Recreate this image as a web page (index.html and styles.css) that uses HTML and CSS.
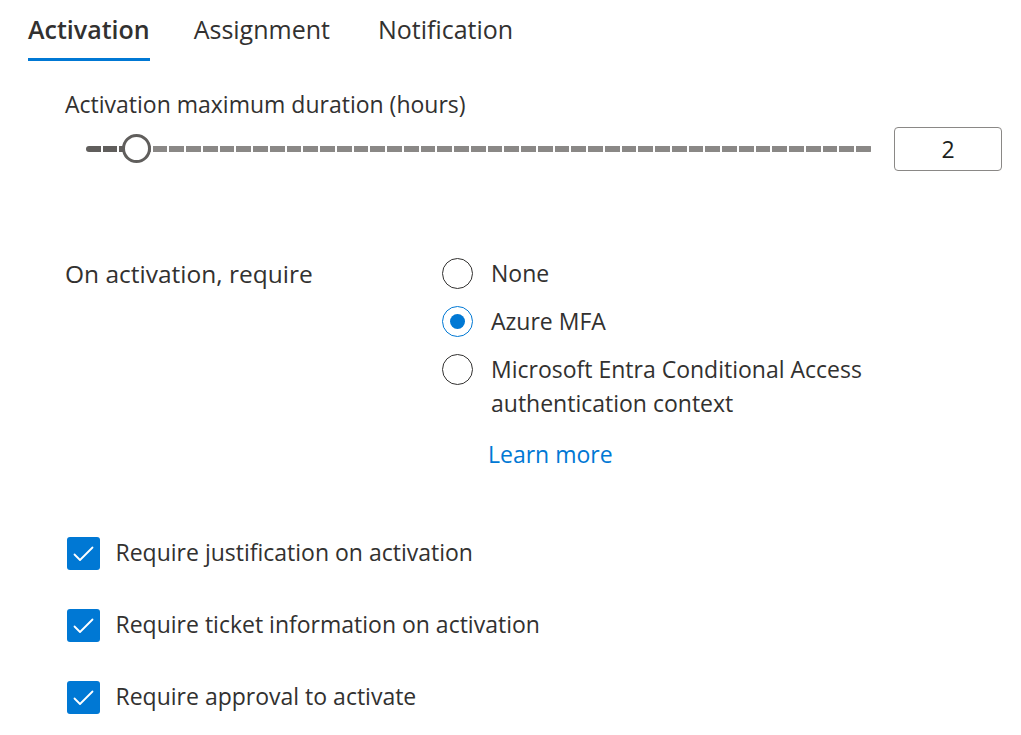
FILE: index.html
```html
<!DOCTYPE html>
<html lang="en">
<head>
<meta charset="utf-8">
<title>Activation settings</title>
<link rel="stylesheet" href="styles.css">
</head>
<body>
<div class="tabs">
  <div class="tab active"><span class="tab-text">Activation</span></div>
  <div class="tab"><span class="tab-text">Assignment</span></div>
  <div class="tab"><span class="tab-text">Notification</span></div>
</div>

<div class="content">
  <div class="field-label">Activation maximum duration (hours)</div>
  <div class="slider-row">
    <div class="slider">
      <div class="track">
        <div class="fill" style="width:50.235px"></div>
        <div class="rest"></div>
      </div>
      <div class="thumb" style="left:50.235px"></div>
    </div>
    <div class="number-box">2</div>
  </div>

  <div class="require-row">
    <div class="require-label">On activation, require</div>
    <div class="options">
      <div class="option">
        <span class="radio"></span>
        <span class="option-text">None</span>
      </div>
      <div class="option">
        <span class="radio checked"><span class="dot"></span></span>
        <span class="option-text">Azure MFA</span>
      </div>
      <div class="option">
        <span class="radio"></span>
        <span class="option-text">Microsoft Entra Conditional Access authentication context</span>
      </div>
      <a class="learn-more" href="#">Learn more</a>
    </div>
  </div>

  <div class="checks">
    <div class="check-row">
      <span class="checkbox"><svg viewBox="0 0 33 33" width="33" height="33"><path d="M7.5 17.5 L13 23 L25.5 10.5" fill="none" stroke="#ffffff" stroke-width="1.8" stroke-linecap="round" stroke-linejoin="round"/></svg></span>
      <span class="check-text">Require justification on activation</span>
    </div>
    <div class="check-row">
      <span class="checkbox"><svg viewBox="0 0 33 33" width="33" height="33"><path d="M7.5 17.5 L13 23 L25.5 10.5" fill="none" stroke="#ffffff" stroke-width="1.8" stroke-linecap="round" stroke-linejoin="round"/></svg></span>
      <span class="check-text">Require ticket information on activation</span>
    </div>
    <div class="check-row">
      <span class="checkbox"><svg viewBox="0 0 33 33" width="33" height="33"><path d="M7.5 17.5 L13 23 L25.5 10.5" fill="none" stroke="#ffffff" stroke-width="1.8" stroke-linecap="round" stroke-linejoin="round"/></svg></span>
      <span class="check-text">Require approval to activate</span>
    </div>
  </div>
</div>
</body>
</html>
```

FILE: styles.css
```css
* { box-sizing: border-box; }

html, body {
  margin: 0;
  padding: 0;
  background: #ffffff;
}

body {
  font-family: "Open Sans", "Noto Sans", sans-serif;
  font-size: 23px;
  line-height: 34px;
  color: #323130;
  width: 1021px;
  height: 735px;
  overflow: hidden;
}

/* Tabs */
.tabs {
  display: flex;
  padding-left: 28px;
  padding-top: 12px;
  height: 61px;
}

.tab {
  font-size: 25px;
  line-height: 34px;
  margin-right: 44px;
}

.tab:nth-child(2) {
  margin-right: 48px;
}

.tab-text {
  display: block;
  padding-bottom: 12px;
  border-bottom: 3px solid transparent;
}

.tab.active .tab-text {
  font-weight: 600;
  border-bottom-color: #0078d4;
}

/* Content */
.content {
  padding-left: 65px;
}

.field-label {
  margin-top: 26px;
}

.slider-row {
  margin-top: 6px;
  height: 44px;
  display: flex;
  align-items: center;
}

.slider {
  position: relative;
  margin-left: 21px;
  width: 787px;
  height: 44px;
  display: flex;
  align-items: center;
}

.track {
  width: 100%;
  height: 6px;
  border-radius: 3px;
  overflow: hidden;
  display: flex;
}

.fill {
  height: 100%;
  flex: none;
  background: repeating-linear-gradient(90deg, #605e5c 0 14.745px, transparent 14.745px 16.745px);
}

.rest {
  height: 100%;
  flex: 1;
  background: repeating-linear-gradient(90deg, #8a8886 0 14.745px, transparent 14.745px 16.745px);
}

.thumb {
  position: absolute;
  top: 50%;
  width: 29px;
  height: 29px;
  margin-left: -14.5px;
  margin-top: -15px;
  border: 3px solid #605e5c;
  border-radius: 50%;
  background: #ffffff;
}

.number-box {
  margin-left: 21px;
  width: 108px;
  height: 44px;
  border: 1px solid #8a8886;
  border-radius: 4px;
  display: flex;
  align-items: center;
  justify-content: center;
  color: #201f1e;
}

/* Require */
.require-row {
  margin-top: 85px;
  display: grid;
  grid-template-columns: 377px 1fr;
}

.require-label {
  font-size: 24.5px;
  margin-top: 1px;
}

.options {
  display: flex;
  flex-direction: column;
  gap: 14px;
  align-items: flex-start;
}

.option {
  display: flex;
  align-items: flex-start;
  gap: 18px;
}

.option-text {
  max-width: 400px;
}

.radio {
  flex: none;
  width: 31px;
  height: 31px;
  margin-top: 2px;
  border: 1px solid #323130;
  border-radius: 50%;
  display: flex;
  align-items: center;
  justify-content: center;
}

.radio.checked {
  border-color: #0078d4;
}

.dot {
  width: 15px;
  height: 15px;
  border-radius: 50%;
  background: #0078d4;
}

.learn-more {
  margin-left: 46px;
  margin-top: 3px;
  color: #0078d4;
  text-decoration: none;
}

/* Checkboxes */
.checks {
  margin-top: 65px;
  display: flex;
  flex-direction: column;
  gap: 38px;
}

.check-row {
  display: flex;
  align-items: center;
  height: 34px;
  gap: 15.5px;
}

.checkbox {
  flex: none;
  margin-left: 2px;
  width: 33px;
  height: 33px;
  border-radius: 3px;
  background: #0078d4;
  display: block;
}

.checkbox svg {
  display: block;
}

.check-text {
  padding-bottom: 2px;
}
```
